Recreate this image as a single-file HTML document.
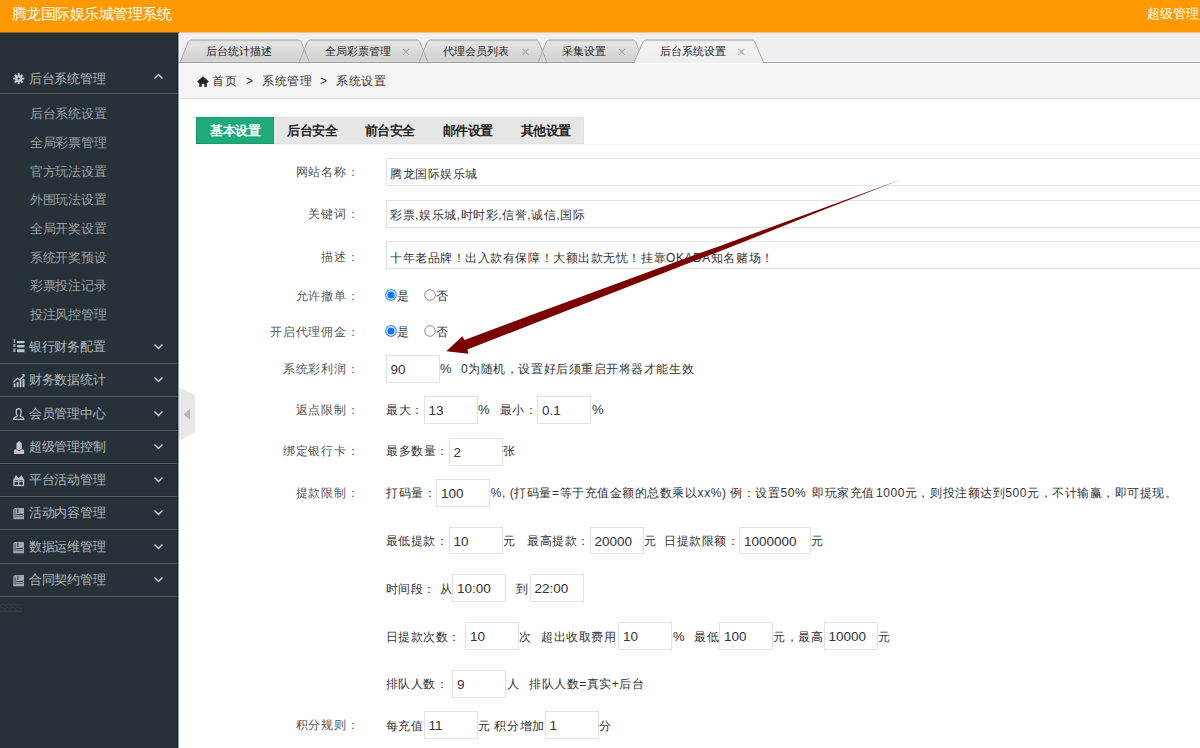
<!DOCTYPE html>
<html><head><meta charset="utf-8">
<style>
*{margin:0;padding:0;box-sizing:border-box}
html,body{width:1200px;height:748px;overflow:hidden;background:#fff;font-family:"Liberation Sans",sans-serif;}
.a{position:absolute;white-space:nowrap}
.sep{position:absolute;left:0;width:177px;height:1px;background:#5c5e5f;box-shadow:0 1px 0 #1f292f,0 -1px 0 #222c32}
.gh{position:absolute;left:29px;font-size:12.5px;letter-spacing:-0.3px;color:#b0b6bc;line-height:16px;white-space:nowrap}
.si{position:absolute;left:30px;font-size:12.5px;letter-spacing:-0.3px;color:#9c9ea0;line-height:16px;white-space:nowrap}
.ic{position:absolute;left:13px}
.chev{position:absolute;left:153px}
.lbl{position:absolute;font-size:12.5px;color:#666;line-height:16px;white-space:nowrap;text-align:right}
.t{position:absolute;font-size:12.5px;color:#333;line-height:16px;white-space:nowrap}
.inp{position:absolute;border:1px solid #e2e2e2;background:#fff;height:28px}
.v{position:absolute;font-size:12.5px;color:#333;line-height:16px;white-space:nowrap}
.tabt{position:absolute;font-size:11px;color:#222;line-height:14px;white-space:nowrap}
</style></head><body>

<div class="a" style="left:0;top:0;width:1200px;height:32px;background:#ff9900"></div>
<div class="a" style="left:12px;top:6px;font-size:14.5px;letter-spacing:-0.55px;line-height:16px;color:#fff">腾龙国际娱乐城管理系统</div>
<div class="a" style="left:1147px;top:6px;font-size:13px;line-height:16px;color:#fff">超级管理员</div>
<div class="a" style="left:0;top:32px;width:177px;height:716px;background:#263238"></div>
<div class="a" style="left:177px;top:32px;width:1px;height:716px;background:#1a242a"></div>
<div class="a" style="left:178px;top:32px;width:1px;height:716px;background:#9a9c9d"></div>
<svg class="ic" style="left:13px;top:72.9px" width="12" height="12" viewBox="0 0 12 12"><g fill="#c0c5ca"><circle cx="5.7" cy="5.6" r="3.4"/><g stroke="#c0c5ca" stroke-width="2"><line x1="5.7" y1="0" x2="5.7" y2="11.2"/><line x1="0.1" y1="5.6" x2="11.3" y2="5.6"/><line x1="1.8" y1="1.7" x2="9.6" y2="9.5"/><line x1="9.6" y1="1.7" x2="1.8" y2="9.5"/></g><circle cx="5.7" cy="5.6" r="1.1" fill="#263238"/></g></svg>
<div class="gh" style="top:70.6px">后台系统管理</div>
<svg class="chev" style="top:73px" width="11" height="7" viewBox="0 0 11 7"><path d="M1.5 5.5 L5.5 1.5 L9.5 5.5" fill="none" stroke="#d0d3d6" stroke-width="1.35"/></svg>
<div class="sep" style="top:93px"></div>
<div class="si" style="top:106.1px">后台系统设置</div>
<div class="si" style="top:134.8px">全局彩票管理</div>
<div class="si" style="top:163.5px">官方玩法设置</div>
<div class="si" style="top:192.1px">外围玩法设置</div>
<div class="si" style="top:220.8px">全局开奖设置</div>
<div class="si" style="top:249.5px">系统开奖预设</div>
<div class="si" style="top:278.2px">彩票投注记录</div>
<div class="si" style="top:306.9px">投注风控管理</div>
<svg class="ic" style="left:13px;top:338.8px" width="12" height="14" viewBox="0 0 12 14"><g fill="#c0c5ca"><rect x="0.6" y="0" width="1.6" height="4" opacity=".7"/><rect x="0.3" y="5" width="2.2" height="3" opacity=".75"/><rect x="0.3" y="9.5" width="2.2" height="3.5" opacity=".75"/><rect x="4" y="2" width="7.5" height="2.2"/><rect x="4" y="6" width="7.5" height="2.5"/><rect x="4" y="10.2" width="7.5" height="3"/></g></svg>
<div class="gh" style="top:339.0px">银行财务配置</div>
<svg class="chev" style="top:343px" width="11" height="7" viewBox="0 0 11 7"><path d="M1.5 1.5 L5.5 5.5 L9.5 1.5" fill="none" stroke="#d0d3d6" stroke-width="1.35"/></svg>
<div class="sep" style="top:363px"></div>
<svg class="ic" style="left:13px;top:374px" width="12" height="14" viewBox="0 0 12 14"><g fill="#c0c5ca"><rect x="0.7" y="9.5" width="1.8" height="3.7"/><rect x="3.7" y="8" width="1.8" height="5.2"/><rect x="6.7" y="6" width="1.8" height="7.2"/><rect x="9.7" y="5" width="1.8" height="8.2"/><path d="M0.3 8.3 L4.5 4.3 L7 6 L10.5 2" stroke="#c0c5ca" stroke-width="1.2" fill="none"/><path d="M8.6 0.2 L11.5 0.2 L11.5 3.2Z"/></g></svg>
<div class="gh" style="top:372.0px">财务数据统计</div>
<svg class="chev" style="top:376px" width="11" height="7" viewBox="0 0 11 7"><path d="M1.5 1.5 L5.5 5.5 L9.5 1.5" fill="none" stroke="#d0d3d6" stroke-width="1.35"/></svg>
<div class="sep" style="top:396px"></div>
<svg class="ic" style="left:13px;top:408px" width="12" height="13" viewBox="0 0 12 13"><g fill="none" stroke="#c0c5ca" stroke-width="1.3"><path d="M4.3 7.6 Q3 6 3.2 3.4 Q3.5 0.7 5.7 0.7 Q8 0.7 8.2 3.4 Q8.4 6 7.1 7.6 Q7 8.2 8 8.6 Q10.8 9.3 10.8 11.3 L0.7 11.3 Q0.7 9.3 3.4 8.6 Q4.4 8.2 4.3 7.6Z"/></g></svg>
<div class="gh" style="top:406.0px">会员管理中心</div>
<svg class="chev" style="top:410px" width="11" height="7" viewBox="0 0 11 7"><path d="M1.5 1.5 L5.5 5.5 L9.5 1.5" fill="none" stroke="#d0d3d6" stroke-width="1.35"/></svg>
<div class="sep" style="top:430px"></div>
<svg class="ic" style="left:13.8px;top:440.7px" width="11" height="14" viewBox="0 0 11 14"><g fill="#c0c5ca"><path d="M5.1 0 L7.8 2.5 L7.8 7.3 L6.3 9 L3.9 9 L2.4 7.3 L2.4 2.5Z"/><path d="M0 8.7 L2.5 8.2 L4.2 9.8 L6 9.8 L7.7 8.2 L10.1 8.7 L10.1 13 L0 13Z"/></g></svg>
<div class="gh" style="top:439.0px">超级管理控制</div>
<svg class="chev" style="top:443px" width="11" height="7" viewBox="0 0 11 7"><path d="M1.5 1.5 L5.5 5.5 L9.5 1.5" fill="none" stroke="#d0d3d6" stroke-width="1.35"/></svg>
<div class="sep" style="top:463px"></div>
<svg class="ic" style="left:13px;top:474.9px" width="12" height="12" viewBox="0 0 12 12"><g fill="none" stroke="#c0c5ca" stroke-width="1.25"><rect x="1" y="4.3" width="9.5" height="6.2"/><line x1="0.3" y1="6.3" x2="11.2" y2="6.3"/><line x1="5.75" y1="4.3" x2="5.75" y2="10.5"/></g><path d="M1 4 L2.8 0.3 L5.75 3 L8.7 0.3 L10.5 4Z" fill="#c0c5ca"/></svg>
<div class="gh" style="top:472.0px">平台活动管理</div>
<svg class="chev" style="top:476px" width="11" height="7" viewBox="0 0 11 7"><path d="M1.5 1.5 L5.5 5.5 L9.5 1.5" fill="none" stroke="#d0d3d6" stroke-width="1.35"/></svg>
<div class="sep" style="top:496px"></div>
<svg class="ic" style="left:13px;top:508.2px" width="12" height="12" viewBox="0 0 12 12"><g fill="#c0c5ca"><path d="M0.3 1.6 L1.8 0 L11 0 L11 11.2 L0.3 11.2Z" opacity=".8"/><rect x="1.6" y="1.4" width="0.9" height="8.3" fill="#263238" opacity=".8"/><rect x="4.4" y="0.8" width="1" height="4.2" fill="#263238"/><rect x="3.2" y="6" width="7" height="1" fill="#263238"/><rect x="3.2" y="8" width="7" height="0.8" fill="#263238" opacity=".7"/></g></svg>
<div class="gh" style="top:505.0px">活动内容管理</div>
<svg class="chev" style="top:509px" width="11" height="7" viewBox="0 0 11 7"><path d="M1.5 1.5 L5.5 5.5 L9.5 1.5" fill="none" stroke="#d0d3d6" stroke-width="1.35"/></svg>
<div class="sep" style="top:529px"></div>
<svg class="ic" style="left:13px;top:542.2px" width="12" height="12" viewBox="0 0 12 12"><g fill="#c0c5ca"><path d="M0.3 1.6 L1.8 0 L11 0 L11 11.2 L0.3 11.2Z" opacity=".8"/><rect x="1.6" y="1.4" width="0.9" height="8.3" fill="#263238" opacity=".8"/><rect x="4.4" y="0.8" width="1" height="4.2" fill="#263238"/><rect x="3.2" y="6" width="7" height="1" fill="#263238"/><rect x="3.2" y="8" width="7" height="0.8" fill="#263238" opacity=".7"/></g></svg>
<div class="gh" style="top:539.0px">数据运维管理</div>
<svg class="chev" style="top:543px" width="11" height="7" viewBox="0 0 11 7"><path d="M1.5 1.5 L5.5 5.5 L9.5 1.5" fill="none" stroke="#d0d3d6" stroke-width="1.35"/></svg>
<div class="sep" style="top:563px"></div>
<svg class="ic" style="left:13px;top:575.2px" width="12" height="12" viewBox="0 0 12 12"><g fill="#c0c5ca"><path d="M0.3 1.6 L1.8 0 L11 0 L11 11.2 L0.3 11.2Z" opacity=".8"/><rect x="1.6" y="1.4" width="0.9" height="8.3" fill="#263238" opacity=".8"/><rect x="4.4" y="0.8" width="1" height="4.2" fill="#263238"/><rect x="3.2" y="6" width="7" height="1" fill="#263238"/><rect x="3.2" y="8" width="7" height="0.8" fill="#263238" opacity=".7"/></g></svg>
<div class="gh" style="top:572.0px">合同契约管理</div>
<svg class="chev" style="top:576px" width="11" height="7" viewBox="0 0 11 7"><path d="M1.5 1.5 L5.5 5.5 L9.5 1.5" fill="none" stroke="#d0d3d6" stroke-width="1.35"/></svg>
<div class="sep" style="top:596px"></div>
<div class="a" style="left:-1px;top:600px;font-size:10.5px;letter-spacing:-1.6px;line-height:16px;color:#3d3b36">SSSS</div>
<div class="a" style="left:179px;top:32px;width:1021px;height:31px;background:#efeff1"></div>
<div class="a" style="left:179px;top:33px;width:1021px;height:1px;background:#e6ecf6"></div>
<div class="a" style="left:179px;top:34px;width:1px;height:29px;background:#f7f6f9"></div>
<div class="a" style="left:179px;top:32px;width:1021px;height:1px;background:#f4c88a"></div>
<div class="a" style="left:0;top:32px;width:179px;height:1px;background:#92661c"></div>
<div class="a" style="left:179px;top:63px;width:1021px;height:36px;background:#f4f4f4;border-left:1px solid #fff;border-top:1px solid #fff"></div>
<div class="a" style="left:179px;top:98px;width:1021px;height:1px;background:#e2e2e2"></div>
<svg class="a" style="left:0;top:0" width="1200" height="70" viewBox="0 0 1200 70">
<defs><linearGradient id="tg" x1="0" y1="0" x2="0" y2="1"><stop offset="0" stop-color="#e6e6e6"/><stop offset="1" stop-color="#cfcfd0"/></linearGradient>
<linearGradient id="ta" x1="0" y1="0" x2="0" y2="1"><stop offset="0" stop-color="#f3f3f4"/><stop offset="1" stop-color="#eeeef0"/></linearGradient></defs>
<path d="M180,62.5 L188.12,42.2 Q189,40.0 191.5,40.0 L298.0,40.0 Q300.5,40.0 301.38,42.2 L309.5,62.5 Z" fill="url(#tg)"/>
<path d="M299,62.5 L307.12,42.2 Q308,40.0 310.5,40.0 L416.5,40.0 Q419,40.0 419.88,42.2 L428,62.5 Z" fill="url(#tg)"/>
<path d="M419,62.5 L427.12,42.2 Q428,40.0 430.5,40.0 L535.5,40.0 Q538,40.0 538.88,42.2 L547,62.5 Z" fill="url(#tg)"/>
<path d="M538,62.5 L546.12,42.2 Q547,40.0 549.5,40.0 L632.5,40.0 Q635,40.0 635.88,42.2 L644,62.5 Z" fill="url(#tg)"/>
<path d="M180,62.5 L188.12,42.2 Q189,40.0 191.5,40.0 L298.0,40.0 Q300.5,40.0 301.38,42.2 L309.5,62.5" fill="none" stroke="#a9a9a9" stroke-width="1"/>
<line x1="190" y1="40.5" x2="299.5" y2="40.5" stroke="#c2c2c2" stroke-width="1.5"/>
<path d="M299,62.5 L307.12,42.2 Q308,40.0 310.5,40.0 L416.5,40.0 Q419,40.0 419.88,42.2 L428,62.5" fill="none" stroke="#a9a9a9" stroke-width="1"/>
<line x1="309" y1="40.5" x2="418" y2="40.5" stroke="#c2c2c2" stroke-width="1.5"/>
<path d="M419,62.5 L427.12,42.2 Q428,40.0 430.5,40.0 L535.5,40.0 Q538,40.0 538.88,42.2 L547,62.5" fill="none" stroke="#a9a9a9" stroke-width="1"/>
<line x1="429" y1="40.5" x2="537" y2="40.5" stroke="#c2c2c2" stroke-width="1.5"/>
<path d="M538,62.5 L546.12,42.2 Q547,40.0 549.5,40.0 L632.5,40.0 Q635,40.0 635.88,42.2 L644,62.5" fill="none" stroke="#a9a9a9" stroke-width="1"/>
<line x1="548" y1="40.5" x2="634" y2="40.5" stroke="#c2c2c2" stroke-width="1.5"/>
<line x1="179" y1="61.5" x2="636" y2="61.5" stroke="#fff" stroke-width="0.6" opacity=".5"/>
<line x1="760" y1="61.5" x2="1200" y2="61.5" stroke="#fff" stroke-width="1"/>
<line x1="179" y1="62.5" x2="1200" y2="62.5" stroke="#999" stroke-width="1"/>
<path d="M634,62.5 L642.75,42.2 Q643.7,40.0 646.2,40.0 L751.5,40.0 Q754,40.0 754.95,42.2 L763.7,62.5 Z" fill="url(#ta)"/>
<path d="M634,62.5 L642.75,42.2 Q643.7,40.0 646.2,40.0 L751.5,40.0 Q754,40.0 754.95,42.2 L763.7,62.5" fill="none" stroke="#a9a9a9" stroke-width="1"/>
<line x1="644.7" y1="40.5" x2="753" y2="40.5" stroke="#c8c8c8" stroke-width="1.5"/>
<line x1="635" y1="62.5" x2="762.7" y2="62.5" stroke="#f0f0f2" stroke-width="1.2"/>
<path d="M403,48.8 L409,54.8 M409,48.8 L403,54.8" stroke="#9fa9b2" stroke-width="1.1"/>
<path d="M522.5,48.8 L528.5,54.8 M528.5,48.8 L522.5,54.8" stroke="#9fa9b2" stroke-width="1.1"/>
<path d="M619,48.8 L625,54.8 M625,48.8 L619,54.8" stroke="#9fa9b2" stroke-width="1.1"/>
<path d="M738.3,48.8 L744.3,54.8 M744.3,48.8 L738.3,54.8" stroke="#9fa9b2" stroke-width="1.1"/>
</svg>
<div class="tabt" style="left:206px;top:44px">后台统计描述</div>
<div class="tabt" style="left:325px;top:44px">全局彩票管理</div>
<div class="tabt" style="left:443px;top:44px">代理会员列表</div>
<div class="tabt" style="left:562px;top:44px">采集设置</div>
<div class="tabt" style="left:660px;top:44px">后台系统设置</div>
<svg class="a" style="left:197px;top:76px" width="12" height="11" viewBox="0 0 12 11"><path d="M6 0.3 L11.8 5.6 L10.4 6.9 L9.8 6.4 L9.8 10.8 L7.3 10.8 L7.3 7.8 L4.7 7.8 L4.7 10.8 L2.2 10.8 L2.2 6.4 L1.6 6.9 L0.2 5.6Z" fill="#222"/></svg>
<div class="a" style="left:212px;top:73.0px;font-size:12px;letter-spacing:0.55px;line-height:16px;color:#333;">首页</div>
<div class="a" style="left:246px;top:73.0px;font-size:12px;letter-spacing:0px;line-height:16px;color:#333;">&gt;</div>
<div class="a" style="left:262px;top:73.0px;font-size:12px;letter-spacing:0.55px;line-height:16px;color:#333;">系统管理</div>
<div class="a" style="left:320px;top:73.0px;font-size:12px;letter-spacing:0px;line-height:16px;color:#333;">&gt;</div>
<div class="a" style="left:336px;top:73.0px;font-size:12px;letter-spacing:0.55px;line-height:16px;color:#333;">系统设置</div>
<div class="a" style="left:196px;top:144px;width:1004px;height:1px;background:#f1f5f9"></div>
<div class="a" style="left:274px;top:117px;width:310px;height:27px;background:#e6e6e6;border:1px solid #e1e1e1;border-left:0"></div>
<div class="a" style="left:196px;top:117px;width:78px;height:27px;background:#20aa7c;border:1px solid #129b6b"></div>
<div class="a" style="left:210px;top:122.7px;font-size:12.5px;letter-spacing:-0.45px;line-height:16px;color:#fff;font-weight:bold">基本设置</div>
<div class="a" style="left:287px;top:122.7px;font-size:12.5px;letter-spacing:-0.45px;line-height:16px;color:#222;font-weight:bold">后台安全</div>
<div class="a" style="left:364.5px;top:122.7px;font-size:12.5px;letter-spacing:-0.45px;line-height:16px;color:#222;font-weight:bold">前台安全</div>
<div class="a" style="left:442.5px;top:122.7px;font-size:12.5px;letter-spacing:-0.45px;line-height:16px;color:#222;font-weight:bold">邮件设置</div>
<div class="a" style="left:520.5px;top:122.7px;font-size:12.5px;letter-spacing:-0.45px;line-height:16px;color:#222;font-weight:bold">其他设置</div>
<div class="a" style="right:840.7px;top:164.2px;font-size:12px;letter-spacing:0.75px;line-height:16px;color:#555;text-align:right">网站名称：</div>
<div class="inp" style="left:386px;top:158px;width:830px;height:28px"></div>
<div class="a" style="left:390px;top:165.7px;font-size:12px;letter-spacing:0.55px;line-height:16px;color:#333;">腾龙国际娱乐城</div>
<div class="a" style="right:840.7px;top:206.2px;font-size:12px;letter-spacing:0.75px;line-height:16px;color:#555;text-align:right">关键词：</div>
<div class="inp" style="left:386px;top:200px;width:830px;height:28px"></div>
<div class="a" style="left:390px;top:207.4px;font-size:12px;letter-spacing:0.55px;line-height:16px;color:#333;">彩票,娱乐城,时时彩,信誉,诚信,国际</div>
<div class="a" style="right:840.7px;top:248.7px;font-size:12px;letter-spacing:0.75px;line-height:16px;color:#555;text-align:right">描述：</div>
<div class="inp" style="left:386px;top:241px;width:830px;height:28px"></div>
<div class="a" style="left:390px;top:249.7px;font-size:12px;letter-spacing:0.55px;line-height:16px;color:#333;">十年老品牌！出入款有保障！大额出款无忧！挂靠OKADA知名赌场！</div>
<div class="a" style="right:840.7px;top:287.7px;font-size:12px;letter-spacing:0.75px;line-height:16px;color:#555;text-align:right">允许撤单：</div>
<svg class="a" style="left:385.2px;top:289px" width="12" height="12" viewBox="0 0 12 12"><circle cx="6" cy="6" r="5.3" fill="#fff" stroke="#3b8ffe" stroke-width="1.2"/><circle cx="6" cy="6" r="3.6" fill="#0a74ff"/></svg>
<div class="a" style="left:397px;top:287.7px;font-size:12px;letter-spacing:0.55px;line-height:16px;color:#333;">是</div>
<svg class="a" style="left:423.7px;top:289px" width="12" height="12" viewBox="0 0 12 12"><circle cx="6" cy="6" r="5.3" fill="#fff" stroke="#8e8e8e" stroke-width="1"/></svg>
<div class="a" style="left:436px;top:287.7px;font-size:12px;letter-spacing:0.55px;line-height:16px;color:#333;">否</div>
<div class="a" style="right:840.7px;top:323.7px;font-size:12px;letter-spacing:0.75px;line-height:16px;color:#555;text-align:right">开启代理佣金：</div>
<svg class="a" style="left:385.2px;top:325px" width="12" height="12" viewBox="0 0 12 12"><circle cx="6" cy="6" r="5.3" fill="#fff" stroke="#3b8ffe" stroke-width="1.2"/><circle cx="6" cy="6" r="3.6" fill="#0a74ff"/></svg>
<div class="a" style="left:397px;top:323.7px;font-size:12px;letter-spacing:0.55px;line-height:16px;color:#333;">是</div>
<svg class="a" style="left:423.7px;top:325px" width="12" height="12" viewBox="0 0 12 12"><circle cx="6" cy="6" r="5.3" fill="#fff" stroke="#8e8e8e" stroke-width="1"/></svg>
<div class="a" style="left:436px;top:323.7px;font-size:12px;letter-spacing:0.55px;line-height:16px;color:#333;">否</div>
<div class="a" style="right:840.7px;top:360.7px;font-size:12px;letter-spacing:0.75px;line-height:16px;color:#555;text-align:right">系统彩利润：</div>
<div class="inp" style="left:385.5px;top:354.5px;width:54px;height:28px"></div>
<div class="a" style="left:390.5px;top:361.5px;font-size:13.5px;line-height:16px;color:#333">90</div>
<div class="a" style="left:440px;top:360.7px;font-size:13px;letter-spacing:0px;line-height:16px;color:#333;">%</div>
<div class="a" style="left:461px;top:360.7px;font-size:12px;letter-spacing:0.55px;line-height:16px;color:#333;">0为随机，设置好后须重启开将器才能生效</div>
<div class="a" style="right:840.7px;top:401.7px;font-size:12px;letter-spacing:0.75px;line-height:16px;color:#555;text-align:right">返点限制：</div>
<div class="a" style="left:386px;top:401.7px;font-size:12px;letter-spacing:0.55px;line-height:16px;color:#333;">最大：</div>
<div class="inp" style="left:423.5px;top:396px;width:54px;height:28px"></div>
<div class="a" style="left:428.5px;top:403.0px;font-size:13.5px;line-height:16px;color:#333">13</div>
<div class="a" style="left:478px;top:401.7px;font-size:13px;letter-spacing:0px;line-height:16px;color:#333;">%</div>
<div class="a" style="left:499.5px;top:401.7px;font-size:12px;letter-spacing:0.55px;line-height:16px;color:#333;">最小：</div>
<div class="inp" style="left:537px;top:396px;width:54px;height:28px"></div>
<div class="a" style="left:542px;top:403.0px;font-size:13.5px;line-height:16px;color:#333">0.1</div>
<div class="a" style="left:592px;top:401.7px;font-size:13px;letter-spacing:0px;line-height:16px;color:#333;">%</div>
<div class="a" style="right:840.7px;top:443.2px;font-size:12px;letter-spacing:0.75px;line-height:16px;color:#555;text-align:right">绑定银行卡：</div>
<div class="a" style="left:386px;top:443.2px;font-size:12px;letter-spacing:0.55px;line-height:16px;color:#333;">最多数量：</div>
<div class="inp" style="left:448.5px;top:437.5px;width:54px;height:28px"></div>
<div class="a" style="left:453.5px;top:444.5px;font-size:13.5px;line-height:16px;color:#333">2</div>
<div class="a" style="left:503px;top:443.2px;font-size:12px;letter-spacing:0.55px;line-height:16px;color:#333;">张</div>
<div class="a" style="right:840.7px;top:484.7px;font-size:12px;letter-spacing:0.75px;line-height:16px;color:#555;text-align:right">提款限制：</div>
<div class="a" style="left:386px;top:485.2px;font-size:12px;letter-spacing:0.55px;line-height:16px;color:#333;">打码量：</div>
<div class="inp" style="left:436px;top:479px;width:54px;height:28px"></div>
<div class="a" style="left:441px;top:486.0px;font-size:13.5px;line-height:16px;color:#333">100</div>
<div class="a" style="left:490.8px;top:485.2px;font-size:12px;letter-spacing:0.55px;line-height:16px;color:#333;">%, (打码量=等于充值金额的总数乘以xx%) 例：设置50%</div>
<div class="a" style="left:812px;top:485.2px;font-size:12px;letter-spacing:0.55px;line-height:16px;color:#333;">即玩家充值</div>
<div class="a" style="left:876px;top:485.2px;font-size:12px;letter-spacing:0.55px;line-height:16px;color:#333;">1000元，则投注额达到500元，不计输赢，即可提现。</div>
<div class="a" style="left:385.5px;top:533.2px;font-size:12px;letter-spacing:0.55px;line-height:16px;color:#333;">最低提款：</div>
<div class="inp" style="left:448.5px;top:527px;width:54px;height:27px"></div>
<div class="a" style="left:453.5px;top:533.5px;font-size:13.5px;line-height:16px;color:#333">10</div>
<div class="a" style="left:503px;top:533.2px;font-size:12px;letter-spacing:0.55px;line-height:16px;color:#333;">元</div>
<div class="a" style="left:527px;top:533.2px;font-size:12px;letter-spacing:0.55px;line-height:16px;color:#333;">最高提款：</div>
<div class="inp" style="left:589.5px;top:527px;width:54px;height:27px"></div>
<div class="a" style="left:594.5px;top:533.5px;font-size:13.5px;line-height:16px;color:#333">20000</div>
<div class="a" style="left:644px;top:533.2px;font-size:12px;letter-spacing:0.55px;line-height:16px;color:#333;">元</div>
<div class="a" style="left:664px;top:533.2px;font-size:12px;letter-spacing:0.55px;line-height:16px;color:#333;">日提款限额：</div>
<div class="inp" style="left:739px;top:527px;width:72px;height:27px"></div>
<div class="a" style="left:744px;top:533.5px;font-size:13.5px;line-height:16px;color:#333">1000000</div>
<div class="a" style="left:811px;top:533.2px;font-size:12px;letter-spacing:0.55px;line-height:16px;color:#333;">元</div>
<div class="a" style="left:385.5px;top:580.7px;font-size:12px;letter-spacing:0.55px;line-height:16px;color:#333;">时间段： 从</div>
<div class="inp" style="left:452px;top:574px;width:54px;height:28px"></div>
<div class="a" style="left:457px;top:581.0px;font-size:13.5px;line-height:16px;color:#333">10:00</div>
<div class="a" style="left:516px;top:580.7px;font-size:12px;letter-spacing:0.55px;line-height:16px;color:#333;">到</div>
<div class="inp" style="left:529.5px;top:574px;width:54px;height:28px"></div>
<div class="a" style="left:534.5px;top:581.0px;font-size:13.5px;line-height:16px;color:#333">22:00</div>
<div class="a" style="left:385.5px;top:628.7px;font-size:12px;letter-spacing:0.55px;line-height:16px;color:#333;">日提款次数：</div>
<div class="inp" style="left:465px;top:622px;width:54px;height:28px"></div>
<div class="a" style="left:470px;top:629.0px;font-size:13.5px;line-height:16px;color:#333">10</div>
<div class="a" style="left:519px;top:628.7px;font-size:12px;letter-spacing:0.55px;line-height:16px;color:#333;">次</div>
<div class="a" style="left:541px;top:628.7px;font-size:12px;letter-spacing:0.55px;line-height:16px;color:#333;">超出收取费用</div>
<div class="inp" style="left:618px;top:622px;width:54px;height:28px"></div>
<div class="a" style="left:623px;top:629.0px;font-size:13.5px;line-height:16px;color:#333">10</div>
<div class="a" style="left:673px;top:628.7px;font-size:13px;letter-spacing:0px;line-height:16px;color:#333;">%</div>
<div class="a" style="left:694px;top:628.7px;font-size:12px;letter-spacing:0.55px;line-height:16px;color:#333;">最低</div>
<div class="inp" style="left:719px;top:622px;width:54px;height:28px"></div>
<div class="a" style="left:724px;top:629.0px;font-size:13.5px;line-height:16px;color:#333">100</div>
<div class="a" style="left:773px;top:628.7px;font-size:12px;letter-spacing:0.55px;line-height:16px;color:#333;">元，最高</div>
<div class="inp" style="left:823.5px;top:622px;width:54px;height:28px"></div>
<div class="a" style="left:828.5px;top:629.0px;font-size:13.5px;line-height:16px;color:#333">10000</div>
<div class="a" style="left:878px;top:628.7px;font-size:12px;letter-spacing:0.55px;line-height:16px;color:#333;">元</div>
<div class="a" style="left:385.5px;top:676.2px;font-size:12px;letter-spacing:0.55px;line-height:16px;color:#333;">排队人数：</div>
<div class="inp" style="left:452px;top:670px;width:54px;height:28px"></div>
<div class="a" style="left:457px;top:677.0px;font-size:13.5px;line-height:16px;color:#333">9</div>
<div class="a" style="left:507px;top:676.2px;font-size:12px;letter-spacing:0.55px;line-height:16px;color:#333;">人</div>
<div class="a" style="left:529px;top:676.2px;font-size:12px;letter-spacing:0.55px;line-height:16px;color:#333;">排队人数=真实+后台</div>
<div class="a" style="right:840.7px;top:716.7px;font-size:12px;letter-spacing:0.75px;line-height:16px;color:#555;text-align:right">积分规则：</div>
<div class="a" style="left:385.5px;top:717.7px;font-size:12px;letter-spacing:0.55px;line-height:16px;color:#333;">每充值</div>
<div class="inp" style="left:423.5px;top:711px;width:54px;height:28px"></div>
<div class="a" style="left:428.5px;top:718.0px;font-size:13.5px;line-height:16px;color:#333">11</div>
<div class="a" style="left:478px;top:717.7px;font-size:12px;letter-spacing:0.55px;line-height:16px;color:#333;">元 积分增加</div>
<div class="inp" style="left:544.5px;top:711px;width:54px;height:28px"></div>
<div class="a" style="left:549.5px;top:718.0px;font-size:13.5px;line-height:16px;color:#333">1</div>
<div class="a" style="left:599px;top:717.7px;font-size:12px;letter-spacing:0.55px;line-height:16px;color:#333;">分</div>
<svg class="a" style="left:179px;top:387px" width="17" height="55" viewBox="0 0 17 55"><path d="M0 0.5 L16 8 L16 45.5 L0 54Z" fill="#e8e8e8"/><path d="M4.8 27.5 L11 21.5 L11 33Z" fill="#b8b8b8"/></svg>
<svg class="a" style="left:0;top:0" width="1200" height="748" viewBox="0 0 1200 748"><path d="M901,179.5 L820,209.2 L720,246 L700,253 L530,315.5 L464.5,340 L462.3,336.3 L446.4,351.3 L468.4,353.8 L467.4,349.6 L530,325 L700,258.8 L720,251.2 L820,211.3 Z" fill="#7a0000"/></svg>
</body></html>
